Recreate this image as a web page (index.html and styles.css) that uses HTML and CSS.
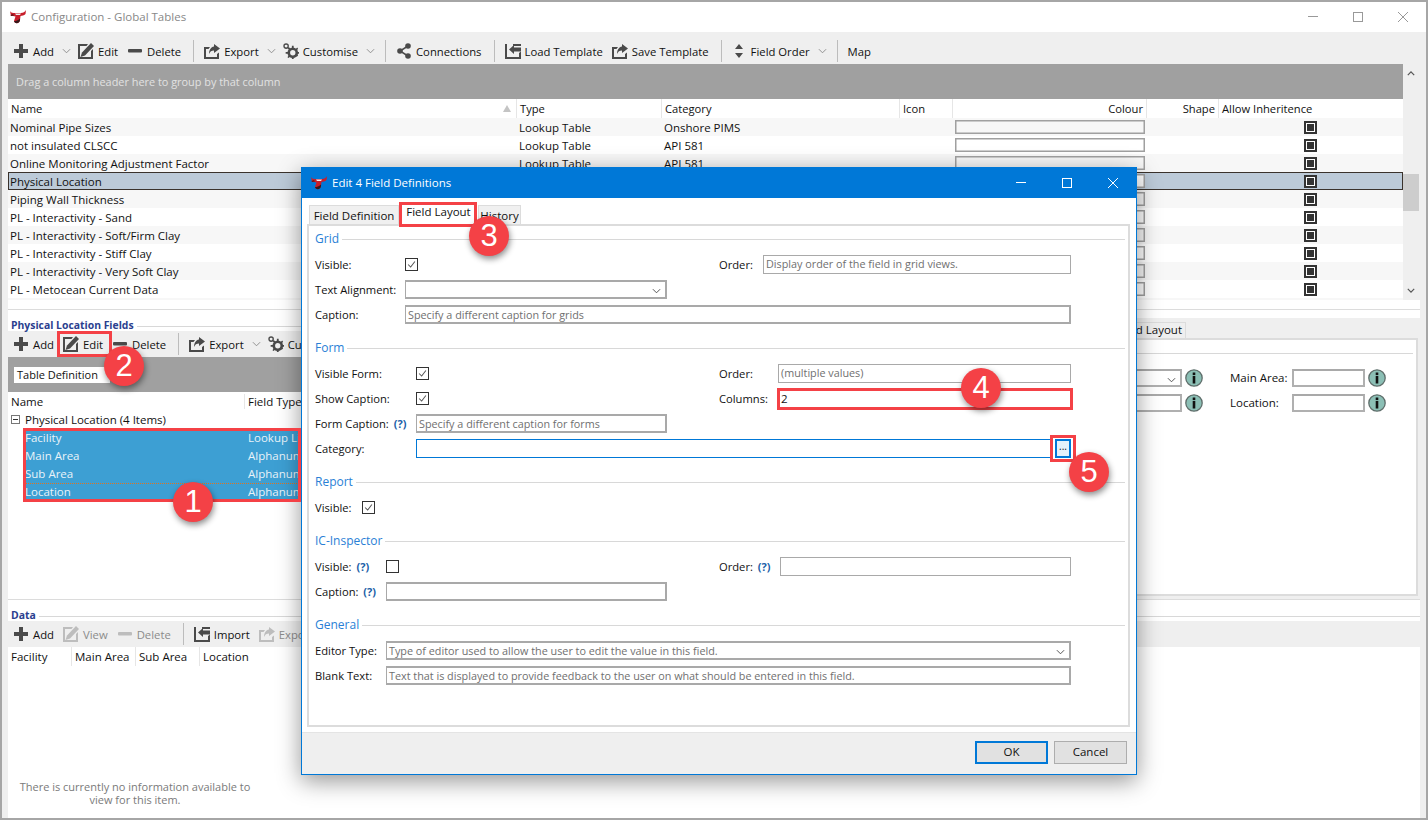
FILE: index.html
```html
<!DOCTYPE html>
<html lang="en">
<head>
  <meta charset="UTF-8" />
  <title>Configuration - Global Tables</title>
  <link rel="stylesheet" href="styles.css">
</head>
<body>
  <svg class="defs" width="0" height="0">
    <symbol id="i-logo" viewBox="0 0 16 14">
      <path d="M0 1 C1 3 3 3 5 3 L11 3 C13 3 15 2 16 0 L15.500 4 C14 5.500 12 5.500 10.500 6 L10 10 C10 13.500 5 14.500 4 11 L5.500 6.500 C4 5.500 2 6 1 6 Z" fill="#c81e2a"/>
      <path d="M4 11 C5 14.500 10 13.500 10 10 L10 8.500 C8 10.500 6 11 4 11 Z" fill="#34181a"/>
      <path d="M5 3.500 L11 3.500 L10 5 L6 5 Z" fill="#efefef"/>
      <path d="M0.500 5 L3 4 L4 5.500 L1 6 Z" fill="#5a1a1e"/>
    </symbol>
    <symbol id="i-plus" viewBox="0 0 16 16">
      <path d="M6 1h4v5h5v4h-5v5H6v-5H1V6h5z" fill="currentColor"/>
    </symbol>
    <symbol id="i-edit" viewBox="0 0 16 16">
      <path d="M0 1h10L8.500 3H2v11h11V8l2-2v10H0z" fill="currentColor"/>
      <path d="M13 0l3 3-9 9.500L2.500 14 4 9.500z" fill="currentColor"/>
    </symbol>
    <symbol id="i-minus" viewBox="0 0 16 16">
      <rect x="1" y="6" width="14" height="3.4" rx="1" fill="currentColor"/>
    </symbol>
    <symbol id="i-export" viewBox="0 0 16 16">
      <path d="M0 4h6L4.500 6H2v8h11v-3l2-1.500V16H0z" fill="currentColor"/>
      <path d="M10 1l6 4.500L10 10V7.500C7.500 7.500 6 8.500 5 11 5 7 7 4 10 3.500z" fill="currentColor"/>
    </symbol>
    <symbol id="i-import" viewBox="0 0 16 16">
      <path d="M0 1h2v13h12v-4l2-1.500V16H0z" fill="currentColor"/>
      <path d="M4 6.500L9 2v2.500h7v4H9V11z" fill="currentColor"/>
      <path d="M8 1h8v2H8z" fill="currentColor"/>
    </symbol>
    <symbol id="i-gear" viewBox="0 0 18 18">
      <circle cx="11" cy="11" r="4.500" fill="none" stroke="currentColor" stroke-width="3"/>
      <path d="M10 3h2v3h-2zM10 16h2v2h-2zM3 10h3v2H3zM16 10h2v2h-2zM5 6l1.500-1.500 2 2L7 8zM14 14l1.500-1.500 1.500 1.500L15.500 15.500zM5 16l2-3 1.500 1.500-2 2.500zM14 7l2-2 1 1.500-1.500 2z" fill="currentColor"/>
      <circle cx="3.500" cy="3.500" r="2.400" fill="none" stroke="currentColor" stroke-width="1.500"/>
    </symbol>
    <symbol id="i-share" viewBox="0 0 16 16">
      <path d="M12 3L4 8l8 5" fill="none" stroke="currentColor" stroke-width="1.500"/>
      <circle cx="12" cy="3" r="2.800" fill="currentColor"/>
      <circle cx="4" cy="8" r="2.800" fill="currentColor"/>
      <circle cx="12" cy="13" r="2.800" fill="currentColor"/>
    </symbol>
    <symbol id="i-updown" viewBox="0 0 8 14">
      <path d="M4 0l4 5H0zM4 14L0 9h8z" fill="currentColor"/>
    </symbol>
    <symbol id="i-info" viewBox="0 0 18 18">
      <circle cx="9" cy="9" r="8.200" fill="#8bbfb5" stroke="#5f6e6b" stroke-width="1.300"/>
      <rect x="7.700" y="3.500" width="2.600" height="2.600" fill="#111"/>
      <rect x="7.700" y="7" width="2.600" height="7.500" fill="#111"/>
    </symbol>
    <symbol id="i-chev" viewBox="0 0 10 6">
      <path d="M1 1l4 4 4-4" fill="none" stroke="currentColor" stroke-width="1"/>
    </symbol>
    <symbol id="i-check" viewBox="0 0 13 13">
      <path d="M2.500 6.500l3 3 5-6.500" fill="none" stroke="#555" stroke-width="1.200"/>
    </symbol>
  </svg>

  <div class="main">
    <div class="titlebar">
      <svg class="logo"><use href="#i-logo"/></svg>
      <span class="title-text">Configuration - Global Tables</span>
      <div class="win-btns">
        <span class="win-min"></span>
        <span class="win-max"></span>
        <svg class="win-close" viewBox="0 0 10 10"><path d="M0 0l10 10M10 0L0 10" stroke="currentColor" fill="none"/></svg>
      </div>
    </div>

    <div class="toolbar toolbar-main">
      <span class="tool"><svg class="ic"><use href="#i-plus"/></svg>Add</span>
      <svg class="chev"><use href="#i-chev"/></svg>
      <span class="tool"><svg class="ic"><use href="#i-edit"/></svg>Edit</span>
      <span class="tool"><svg class="ic"><use href="#i-minus"/></svg>Delete</span>
      <span class="sep"></span>
      <span class="tool"><svg class="ic"><use href="#i-export"/></svg>Export</span>
      <svg class="chev"><use href="#i-chev"/></svg>
      <span class="tool"><svg class="ic"><use href="#i-gear"/></svg>Customise</span>
      <svg class="chev"><use href="#i-chev"/></svg>
      <span class="sep"></span>
      <span class="tool"><svg class="ic"><use href="#i-share"/></svg>Connections</span>
      <span class="sep"></span>
      <span class="tool"><svg class="ic"><use href="#i-import"/></svg>Load Template</span>
      <span class="tool"><svg class="ic"><use href="#i-export"/></svg>Save Template</span>
      <span class="sep"></span>
      <span class="tool tool-order"><svg class="ic-order"><use href="#i-updown"/></svg>Field Order</span>
      <svg class="chev"><use href="#i-chev"/></svg>
      <span class="sep"></span>
      <span class="tool">Map</span>
    </div>

    <div class="tables">
      <div class="tables-grid">
        <div class="group-panel">Drag a column header here to group by that column</div>
        <div class="grid-row grid-head">
          <span class="cell cell-name">Name<i class="sort"></i></span>
          <span class="cell">Type</span>
          <span class="cell">Category</span>
          <span class="cell">Icon</span>
          <span class="cell cell-right">Colour</span>
          <span class="cell cell-right">Shape</span>
          <span class="cell">Allow Inheritence</span>
        </div>
        <div class="grid-row"><span class="cell">Nominal Pipe Sizes</span><span class="cell">Lookup Table</span><span class="cell">Onshore PIMS</span><span class="cell"></span><span class="cell"><i class="swatch"></i></span><span class="cell"></span><span class="cell"><i class="tick"></i></span></div>
        <div class="grid-row"><span class="cell">not insulated CLSCC</span><span class="cell">Lookup Table</span><span class="cell">API 581</span><span class="cell"></span><span class="cell"><i class="swatch"></i></span><span class="cell"></span><span class="cell"><i class="tick"></i></span></div>
        <div class="grid-row"><span class="cell">Online Monitoring Adjustment Factor</span><span class="cell">Lookup Table</span><span class="cell">API 581</span><span class="cell"></span><span class="cell"><i class="swatch"></i></span><span class="cell"></span><span class="cell"><i class="tick"></i></span></div>
        <div class="grid-row row-selected"><span class="cell">Physical Location</span><span class="cell">Lookup Table</span><span class="cell"></span><span class="cell"></span><span class="cell"><i class="swatch"></i></span><span class="cell"></span><span class="cell"><i class="tick"></i></span></div>
        <div class="grid-row"><span class="cell">Piping Wall Thickness</span><span class="cell">Lookup Table</span><span class="cell"></span><span class="cell"></span><span class="cell"><i class="swatch"></i></span><span class="cell"></span><span class="cell"><i class="tick"></i></span></div>
        <div class="grid-row"><span class="cell">PL - Interactivity - Sand</span><span class="cell">Lookup Table</span><span class="cell"></span><span class="cell"></span><span class="cell"><i class="swatch"></i></span><span class="cell"></span><span class="cell"><i class="tick"></i></span></div>
        <div class="grid-row"><span class="cell">PL - Interactivity - Soft/Firm Clay</span><span class="cell">Lookup Table</span><span class="cell"></span><span class="cell"></span><span class="cell"><i class="swatch"></i></span><span class="cell"></span><span class="cell"><i class="tick"></i></span></div>
        <div class="grid-row"><span class="cell">PL - Interactivity - Stiff Clay</span><span class="cell">Lookup Table</span><span class="cell"></span><span class="cell"></span><span class="cell"><i class="swatch"></i></span><span class="cell"></span><span class="cell"><i class="tick"></i></span></div>
        <div class="grid-row"><span class="cell">PL - Interactivity - Very Soft Clay</span><span class="cell">Lookup Table</span><span class="cell"></span><span class="cell"></span><span class="cell"><i class="swatch"></i></span><span class="cell"></span><span class="cell"><i class="tick"></i></span></div>
        <div class="grid-row"><span class="cell">PL - Metocean Current Data</span><span class="cell">Lookup Table</span><span class="cell"></span><span class="cell"></span><span class="cell"><i class="swatch"></i></span><span class="cell"></span><span class="cell"><i class="tick"></i></span></div>
        <div class="grid-row"><span class="cell"></span><span class="cell"></span><span class="cell"></span><span class="cell"></span><span class="cell"><i class="swatch"></i></span><span class="cell"></span><span class="cell"><i class="tick"></i></span></div>
      </div>
      <div class="scrollbar">
        <svg class="scroll-arrow" viewBox="0 0 10 6"><path d="M1 5l4-4 4 4" fill="none" stroke="#555" stroke-width="1.500"/></svg>
        <div class="scroll-track"><div class="scroll-thumb"></div></div>
        <svg class="scroll-arrow" viewBox="0 0 10 6"><path d="M1 1l4 4 4-4" fill="none" stroke="#555" stroke-width="1.500"/></svg>
      </div>
    </div>

    <div class="middle">
      <div class="fields">
        <div class="section-head"><span>Physical Location Fields</span></div>
        <div class="toolbar toolbar-sub">
          <span class="tool"><svg class="ic"><use href="#i-plus"/></svg>Add</span>
          <span class="tool"><svg class="ic"><use href="#i-edit"/></svg>Edit</span>
          <span class="tool"><svg class="ic"><use href="#i-minus"/></svg>Delete</span>
          <span class="sep"></span>
          <span class="tool"><svg class="ic"><use href="#i-export"/></svg>Export</span>
          <svg class="chev"><use href="#i-chev"/></svg>
          <span class="tool"><svg class="ic"><use href="#i-gear"/></svg>Customise</span>
        </div>
        <div class="group-panel group-panel-fields"><span class="group-chip">Table Definition</span></div>
        <div class="fields-head">
          <span class="fields-name">Name</span>
          <span>Field Type</span>
        </div>
        <div class="tree-group"><i class="tree-toggle"></i>Physical Location (4 Items)</div>
        <div class="tree-row"><span class="fields-name">Facility</span><span>Lookup List</span></div>
        <div class="tree-row"><span class="fields-name">Main Area</span><span>Alphanumeric</span></div>
        <div class="tree-row"><span class="fields-name">Sub Area</span><span>Alphanumeric</span></div>
        <div class="tree-row tree-row-focus"><span class="fields-name">Location</span><span>Alphanumeric</span></div>
      </div>

      <div class="layout-side">
        <div class="side-tabs"><span class="side-tab">Field Layout</span></div>
        <div class="side-panel">
          <div class="side-rule"></div>
          <div class="side-row">
            <span class="side-input side-select"><svg class="chev chev-field"><use href="#i-chev"/></svg></span>
            <svg class="info"><use href="#i-info"/></svg>
            <span class="side-label">Main Area:</span>
            <span class="side-input"></span>
            <svg class="info"><use href="#i-info"/></svg>
          </div>
          <div class="side-row">
            <span class="side-input side-select"></span>
            <svg class="info"><use href="#i-info"/></svg>
            <span class="side-label">Location:</span>
            <span class="side-input"></span>
            <svg class="info"><use href="#i-info"/></svg>
          </div>
        </div>
      </div>
    </div>

    <div class="data">
      <div class="section-head section-head-data"><span>Data</span></div>
      <div class="toolbar toolbar-sub toolbar-data">
        <span class="tool"><svg class="ic"><use href="#i-plus"/></svg>Add</span>
        <span class="tool tool-off"><svg class="ic"><use href="#i-edit"/></svg>View</span>
        <span class="tool tool-off"><svg class="ic"><use href="#i-minus"/></svg>Delete</span>
        <span class="sep"></span>
        <span class="tool"><svg class="ic"><use href="#i-import"/></svg>Import</span>
        <span class="tool tool-off"><svg class="ic"><use href="#i-export"/></svg>Export</span>
      </div>
      <div class="data-head">
        <span>Facility</span>
        <span>Main Area</span>
        <span>Sub Area</span>
        <span>Location</span>
      </div>
      <div class="data-empty">There is currently no information available to<br>view for this item.</div>
    </div>
  </div>

  <!-- dialog over the main window -->
  <div class="dialog">
    <div class="dialog-title">
      <svg class="logo"><use href="#i-logo"/></svg>
      <span>Edit 4 Field Definitions</span>
      <div class="win-btns win-btns-dialog">
        <span class="win-min"></span>
        <span class="win-max"></span>
        <svg class="win-close" viewBox="0 0 10 10"><path d="M0 0l10 10M10 0L0 10" stroke="currentColor" fill="none"/></svg>
      </div>
    </div>

    <div class="dialog-body">
      <div class="tabs">
        <span class="tab">Field Definition</span>
        <span class="tab tab-active">Field Layout</span>
        <span class="tab tab-last">History</span>
      </div>
      <div class="tab-panel">
        <section class="form-group">
          <div class="form-head">Grid</div>
          <div class="form-row">
            <div class="form-left"><label class="lab lab-grid">Visible:</label><span class="box"><svg><use href="#i-check"/></svg></span></div>
            <div class="form-right"><label class="lab lab-r1">Order:</label><span class="field field-hint">Display order of the field in grid views.</span></div>
          </div>
          <div class="form-row">
            <div class="form-left"><label class="lab lab-grid">Text Alignment:</label><span class="field field-thick field-select"><svg class="chev chev-field"><use href="#i-chev"/></svg></span></div>
          </div>
          <div class="form-row">
            <label class="lab lab-grid">Caption:</label><span class="field field-thick field-hint field-long">Specify a different caption for grids</span>
          </div>
        </section>

        <section class="form-group">
          <div class="form-head">Form</div>
          <div class="form-row">
            <div class="form-left"><label class="lab lab-form">Visible Form:</label><span class="box"><svg><use href="#i-check"/></svg></span></div>
            <div class="form-right"><label class="lab lab-r2">Order:</label><span class="field field-hint">(multiple values)</span></div>
          </div>
          <div class="form-row">
            <div class="form-left"><label class="lab lab-form">Show Caption:</label><span class="box"><svg><use href="#i-check"/></svg></span></div>
            <div class="form-right"><label class="lab lab-r2">Columns:</label><span class="field">2</span></div>
          </div>
          <div class="form-row">
            <div class="form-left"><label class="lab lab-form">Form Caption: <b class="help">(?)</b></label><span class="field field-thick field-hint">Specify a different caption for forms</span></div>
          </div>
          <div class="form-row">
            <label class="lab lab-form">Category:</label><span class="field field-focus"></span><span class="dots">...</span>
          </div>
        </section>

        <section class="form-group">
          <div class="form-head">Report</div>
          <div class="form-row">
            <label class="lab lab-rep">Visible:</label><span class="box"><svg><use href="#i-check"/></svg></span>
          </div>
        </section>

        <section class="form-group">
          <div class="form-head">IC-Inspector</div>
          <div class="form-row">
            <div class="form-left"><label class="lab lab-ic">Visible: <b class="help">(?)</b></label><span class="box"></span></div>
            <div class="form-right"><label class="lab lab-r3">Order: <b class="help">(?)</b></label><span class="field"></span></div>
          </div>
          <div class="form-row">
            <div class="form-left"><label class="lab lab-ic">Caption: <b class="help">(?)</b></label><span class="field field-thick"></span></div>
          </div>
        </section>

        <section class="form-group">
          <div class="form-head">General</div>
          <div class="form-row">
            <label class="lab lab-ic">Editor Type:</label><span class="field field-thick field-hint field-long field-select">Type of editor used to allow the user to edit the value in this field.<svg class="chev chev-field"><use href="#i-chev"/></svg></span>
          </div>
          <div class="form-row">
            <label class="lab lab-ic">Blank Text:</label><span class="field field-thick field-hint field-long">Text that is displayed to provide feedback to the user on what should be entered in this field.</span>
          </div>
        </section>
      </div>
    </div>

    <div class="dialog-foot">
      <button class="btn btn-default">OK</button>
      <button class="btn">Cancel</button>
    </div>
  </div>

  <!-- callouts drawn on top of the screenshot -->
  <div class="mark mark-rows"></div>
  <div class="mark mark-edit"></div>
  <div class="mark mark-tab"></div>
  <div class="mark mark-cols"></div>
  <div class="mark mark-dots"></div>
  <div class="badge badge-1">1</div>
  <div class="badge badge-2">2</div>
  <div class="badge badge-3">3</div>
  <div class="badge badge-4">4</div>
  <div class="badge badge-5">5</div>
</body>
</html>
```

FILE: styles.css
```css
* {
  box-sizing: border-box;
}

body {
  margin: 0;
  width: 1428px;
  height: 820px;
  overflow: hidden;
  position: relative;
  font-family: "Open Sans", "Noto Sans", sans-serif;
  font-size: 11.5px;
  color: #111;
  background: #fff;
}

.defs {
  position: absolute;
}

.main {
  height: 820px;
  display: flex;
  flex-direction: column;
  border: 2px solid #a6a6a6;
  background: #efefef;
}

/* title bars */
.titlebar {
  height: 30px;
  flex: none;
  display: flex;
  align-items: center;
  padding-left: 8px;
  padding-bottom: 1px;
  background: #fff;
  color: #888;
}

.logo {
  width: 16px;
  height: 14px;
  flex: none;
  margin-right: 5px;
}

.win-btns {
  margin-left: auto;
  display: flex;
  align-items: center;
  gap: 35px;
  padding-right: 18px;
  color: #999;
}

.win-min {
  width: 10px;
  height: 1px;
  background: currentColor;
}

.win-max {
  width: 10px;
  height: 10px;
  border: 1px solid currentColor;
}

.win-close {
  width: 10px;
  height: 10px;
}

/* toolbars */
.toolbar {
  height: 32px;
  flex: none;
  display: flex;
  align-items: center;
  padding-left: 11px;
  font-size: 11.3px;
  white-space: nowrap;
  overflow: hidden;
}

.toolbar-main {
  padding-top: 6px;
}

.toolbar-sub {
  height: 26px;
  padding-left: 5px;
  background: #efefef;
}

.tool {
  display: inline-flex;
  align-items: center;
  gap: 4px;
  margin-right: 9px;
}

.tool-off {
  color: #8b8b8b;
}

.ic {
  width: 16px;
  height: 16px;
  color: #4a4a4a;
  flex: none;
}

.tool-off .ic {
  color: #bdbdbd;
}

.ic-order {
  width: 8px;
  height: 14px;
  color: #4a4a4a;
  margin: 0 4px 0 3px;
}

.chev {
  width: 9px;
  height: 6px;
  color: #888;
  flex: none;
  margin-right: 7px;
}

.tool + .chev {
  margin-left: -1px;
}

.sep {
  width: 1px;
  height: 22px;
  flex: none;
  background: #bcbcbc;
  margin: 0 10px 0 3px;
}

/* global tables grid */
.tables {
  height: 236px;
  flex: none;
  display: flex;
  padding-left: 6px;
}

.tables-grid {
  width: 1395px;
  overflow: hidden;
  background: #fff;
}

.group-panel {
  height: 35px;
  display: flex;
  align-items: center;
  padding-left: 8px;
  font-size: 10.9px;
  background: #a0a0a0;
  color: #e2e2e2;
}

.grid-row {
  display: grid;
  grid-template-columns: 509px 145px 238px 53px 194px 72px 184px;
  height: 18px;
  align-items: center;
}

.grid-row:nth-child(odd) {
  background: #f7f7f7;
}

.grid-head {
  height: 19px;
  font-size: 11.2px;
  background: #fff;
}

.grid-head .cell {
  height: 19px;
  line-height: 19px;
  padding-left: 3px;
  border-right: 1px solid #e6e6e6;
}

.grid-head .cell-right {
  padding-right: 3px;
}

.grid-head .cell:last-child {
  border-right: 0;
}

.cell {
  padding-left: 2px;
  white-space: nowrap;
  position: relative;
}

.cell-right {
  text-align: right;
}

.sort {
  position: absolute;
  left: 495px;
  top: 6px;
  width: 0;
  height: 0;
  border-left: 4px solid transparent;
  border-right: 4px solid transparent;
  border-bottom: 7px solid #c4c4c4;
}

.row-selected {
  background: #bccad8 !important;
  outline: 1px solid #3a322c;
  outline-offset: -1px;
}

.swatch {
  display: block;
  height: 14px;
  margin-right: 2px;
  border: 1px solid #a0a0a0;
  background: #fff;
  box-shadow: inset 0 0 0 0.5px #a0a0a0;
}

.grid-row:nth-child(odd) .swatch {
  background: #f7f7f7;
}

.tick {
  display: block;
  width: 13px;
  height: 13px;
  margin-left: 83px;
  border: 2px solid #333;
  background: #fff;
  position: relative;
}

.tick::after {
  content: "";
  position: absolute;
  inset: 1px;
  background: #333;
}

.scrollbar {
  width: 16px;
  display: flex;
  flex-direction: column;
  align-items: center;
  background: #efefef;
}

.scroll-arrow {
  width: 8px;
  height: 5px;
  flex: none;
  margin: 7px 0;
}

.scroll-track {
  flex: 1;
  width: 100%;
}

.scroll-thumb {
  height: 37px;
  margin-top: 91px;
  background: #cdcdcd;
}

/* middle part of the window */
.middle {
  height: 300px;
  flex: none;
  display: flex;
  margin: 0 6px;
  background: #fff;
  border-bottom: 1px solid #dcdcdc;
  position: relative;
}

.middle::before {
  content: "";
  position: absolute;
  left: 0;
  right: 0;
  top: 9px;
  height: 1px;
  background: #dcdcdc;
}

.fields {
  width: 700px;
  flex: none;
  padding-top: 18px;
}

.section-head {
  height: 13px;
  display: flex;
  align-items: center;
  gap: 3px;
  padding-left: 3px;
  font-size: 10.4px;
  font-weight: 700;
  color: #2b3f8f;
  white-space: nowrap;
}

.section-head::after {
  content: "";
  flex: 1;
  height: 1px;
  margin-top: 3px;
  background: #d8d8d8;
}

.group-panel-fields {
  padding-left: 6px;
}

.group-chip {
  width: 96px;
  height: 16px;
  line-height: 16px;
  padding-left: 3px;
  font-size: 11px;
  background: #fff;
  color: #111;
}

.fields-head {
  height: 19px;
  display: flex;
  align-items: center;
}

.fields-name {
  width: 237px;
  padding-left: 3px;
  flex: none;
  border-right: 1px solid #e6e6e6;
  margin-right: 3px;
}

.tree-group {
  height: 18px;
  display: flex;
  align-items: center;
  padding: 0 0 1px 3px;
}

.tree-toggle {
  width: 9px;
  height: 9px;
  margin-right: 5px;
  border: 1px solid #777;
  position: relative;
}

.tree-toggle::after {
  content: "";
  position: absolute;
  left: 1px;
  right: 1px;
  top: 3px;
  height: 1px;
  background: #333;
}

.tree-row {
  height: 18px;
  width: 340px;
  margin-left: 17px;
  padding-bottom: 1px;
  display: flex;
  align-items: center;
  white-space: nowrap;
  background: #3d9fd3;
  color: #e9f3f9;
}

.tree-row .fields-name {
  width: 220px;
  padding-left: 0;
  border-right: 0;
  margin-right: 3px;
}

.tree-row-focus {
  padding-bottom: 2px;
  border-top: 1px dotted #e0731e;
}

.layout-side {
  flex: 1;
  display: flex;
  flex-direction: column;
  padding: 18px 2px 3px 0;
  background: linear-gradient(#fff 0, #fff 18px, #efefef 18px);
}

.side-tabs {
  height: 20px;
  flex: none;
  display: flex;
  justify-content: flex-end;
  padding-right: 232px;
  padding-top: 4px;
}

.side-tab {
  width: 90px;
  height: 16px;
  line-height: 14px;
  padding-right: 3px;
  text-align: right;
  border: 1px solid #dcdcdc;
  border-bottom: 0;
  background: #efefef;
}

.side-panel {
  flex: 1;
  background: #fff;
  border: 2px solid #dcdcdc;
  padding: 13px 3px 0 0;
}

.side-rule {
  height: 1px;
  background: #d8d8d8;
  margin-bottom: 15px;
}

.side-row {
  height: 25px;
  display: flex;
  align-items: flex-start;
  justify-content: flex-end;
  padding-right: 27px;
}

.side-input {
  width: 73px;
  height: 18px;
  border: 2px solid #b0b0b0;
  border-top-color: #a9a9a9;
  background: #fff;
  position: relative;
  flex: none;
}

.side-select {
  width: 120px;
}

.side-label {
  width: 62px;
  line-height: 18px;
  margin-left: 27px;
  flex: none;
}

.info {
  width: 18px;
  height: 18px;
  margin-left: 3px;
  flex: none;
}

/* data part */
.data {
  flex: 1;
  margin: 0 6px;
  background: #fff;
  padding-top: 8px;
  display: flex;
  flex-direction: column;
  position: relative;
}

.section-head-data {
  flex: none;
}

.data-head {
  display: flex;
  height: 19px;
  align-items: center;
  flex: none;
}

.data-head span {
  width: 64px;
  padding-left: 3px;
  line-height: 19px;
  border-right: 1px solid #e6e6e6;
}

.data-head span:last-child {
  border-right: 0;
}

.data-empty {
  position: absolute;
  left: 0;
  top: 180px;
  width: 254px;
  text-align: center;
  font-size: 11px;
  line-height: 13px;
  color: #7a7a7a;
}

/* dialog */
.dialog {
  position: absolute;
  left: 301px;
  top: 167px;
  width: 836px;
  height: 608px;
  display: flex;
  flex-direction: column;
  border: 1px solid #0078d7;
  border-top: 0;
  background: #fff;
  box-shadow: 0 6px 22px rgba(0, 0, 0, 0.42);
}

.dialog-title {
  height: 31px;
  flex: none;
  display: flex;
  align-items: center;
  padding-left: 9px;
  background: #0078d7;
  color: #fff;
}

.win-btns-dialog {
  color: #fff;
  gap: 36px;
  padding-right: 18px;
}

.dialog-body {
  flex: 1;
  padding: 5px 6px 5px 5px;
  display: flex;
  flex-direction: column;
}

.tabs {
  height: 21px;
  flex: none;
  display: flex;
  align-items: flex-end;
  padding-left: 2px;
}

.tab {
  height: 19px;
  line-height: 19px;
  width: 90px;
  margin-right: 1px;
  text-align: center;
  white-space: nowrap;
  background: #f0f0f0;
  border: 1px solid #dcdcdc;
  border-bottom: 0;
}

.tab-active {
  width: 77px;
  height: 22px;
  background: #fff;
  line-height: 20px;
  border: 0;
}

.tab-last {
  width: 43px;
}

.tab-panel {
  flex: 1;
  border: 2px solid #dcdcdc;
  padding: 2px 3px 0 6px;
  background: #fff;
}

.form-group {
  padding-bottom: 10px;
}

.form-head {
  height: 20px;
  margin-bottom: 4px;
  display: flex;
  align-items: center;
  gap: 3px;
  font-size: 12px;
  color: #2a7fd6;
}

.form-head::after {
  content: "";
  flex: 1;
  height: 1px;
  margin-top: 3px;
  background: #d8d8d8;
}

.form-row {
  height: 25px;
  display: flex;
  align-items: center;
}

.form-left {
  width: 404px;
  flex: none;
  display: flex;
  align-items: center;
  padding-right: 52px;
}

.form-right {
  flex: none;
  width: 352px;
  display: flex;
  align-items: center;
}

.lab {
  flex: none;
  font-size: 11.2px;
  white-space: nowrap;
}

.lab-grid { width: 90px; }
.lab-form { width: 101px; }
.lab-rep { width: 47px; }
.lab-ic { width: 71px; }
.lab-r1 { width: 44px; }
.lab-r2 { width: 59px; }
.lab-r3 { width: 61px; }

.help {
  color: #1c5fa8;
  font-size: 11px;
  margin-left: 2px;
}

.box {
  width: 13px;
  height: 13px;
  flex: none;
  border: 1px solid #333;
  background: #fff;
  display: block;
}

.box svg {
  display: block;
  width: 11px;
  height: 11px;
}

.field {
  flex: 1;
  min-width: 0;
  height: 19px;
  line-height: 17px;
  padding-left: 2px;
  border: 1px solid #a9a9a9;
  background: #fff;
  white-space: nowrap;
  position: relative;
}

.field-hint {
  font-size: 10.8px;
  line-height: 16px;
  color: #6f6f6f;
}

.field-thick {
  border-width: 2px 2px 2px 1px;
  line-height: 15px;
}

.field-long {
  flex: none;
  width: 666px;
}

.lab-ic + .field-long {
  width: 685px;
}

.lab-form + .field-focus {
  flex: none;
  width: 637px;
  border-color: #0078d7;
  border-width: 1px;
}

.dots {
  width: 16px;
  height: 19px;
  margin-left: 2px;
  flex: none;
  line-height: 11px;
  text-align: center;
  font-size: 10px;
  border: 2px solid #0078d7;
  background: #e5f1fb;
}

.chev-field {
  position: absolute;
  right: 4px;
  top: 6px;
  margin: 0;
  color: #444;
}

.dialog-foot {
  height: 42px;
  flex: none;
  display: flex;
  justify-content: flex-end;
  align-items: flex-start;
  gap: 6px;
  padding: 8px 9px 0 0;
  background: #efefef;
  border-top: 1px solid #e4e4e4;
}

.btn {
  width: 73px;
  height: 23px;
  padding: 0 0 2px;
  font: inherit;
  color: #111;
  background: #e1e1e1;
  border: 1px solid #adadad;
}

.btn-default {
  border: 2px solid #0078d7;
}

/* red callouts */
.mark {
  position: absolute;
  border: 3px solid #f44146;
}

.mark-rows { left: 23px; top: 428px; width: 278px; height: 74px; }
.mark-edit { left: 57px; top: 331px; width: 55px; height: 26px; }
.mark-tab { left: 399px; top: 202px; width: 78px; height: 25px; }
.mark-cols { left: 777px; top: 388px; width: 296px; height: 22px; }
.mark-dots { left: 1050px; top: 435px; width: 26px; height: 27px; }

.badge {
  position: absolute;
  width: 40px;
  height: 40px;
  border-radius: 50%;
  display: flex;
  align-items: center;
  justify-content: center;
  font-family: "Liberation Sans", sans-serif;
  font-size: 31px;
  color: #fff;
  background: #f44146;
  box-shadow: 1px 3px 6px rgba(0, 0, 0, 0.45);
}

.badge-1 { left: 173px; top: 482px; }
.badge-2 { left: 104px; top: 346px; }
.badge-3 { left: 469px; top: 216px; }
.badge-4 { left: 961px; top: 368px; }
.badge-5 { left: 1069px; top: 452px; }
```
